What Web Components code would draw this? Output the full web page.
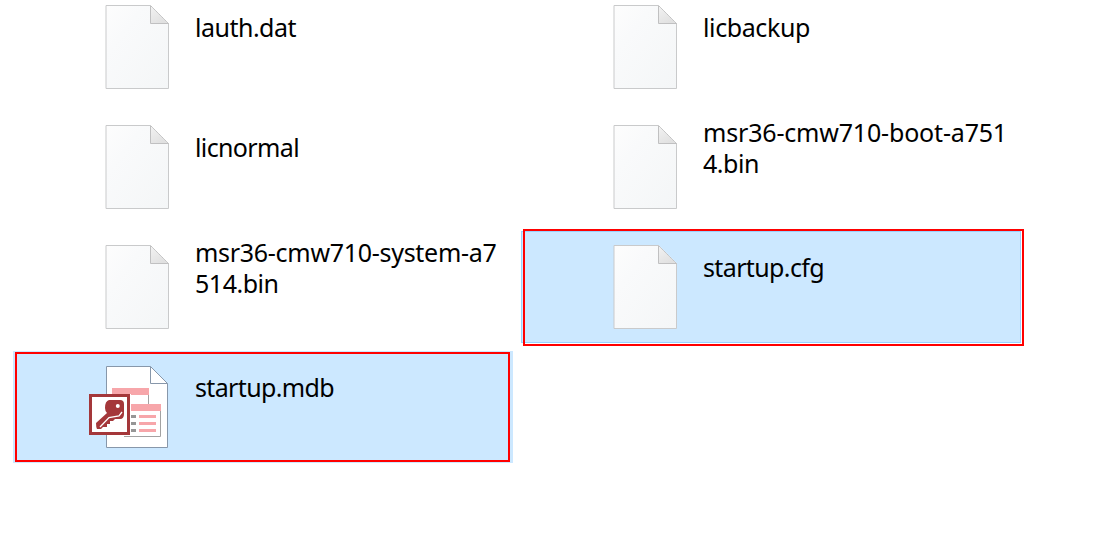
<!DOCTYPE html>
<html lang="en">
<head>
<meta charset="utf-8">
<title>Files</title>
<style>
html, body { margin: 0; height: 100%; background: #fff; overflow: hidden; }
</style>
</head>
<body>
<file-browser></file-browser>
<script>
class FileIcon extends HTMLElement {
  connectedCallback() {
    const blank = `<svg width="64" height="84" viewBox="0 0 64 84">
      <defs>
        <linearGradient id="p" x1="0" y1="0" x2="1" y2="1"><stop offset="0" stop-color="#fdfdfd"/><stop offset=".3" stop-color="#f9fafb"/><stop offset="1" stop-color="#f4f6f7"/></linearGradient>
        <linearGradient id="f" x1="0" y1="0" x2=".6" y2="1"><stop offset="0" stop-color="#f3f3f3"/><stop offset="1" stop-color="#e0e0e0"/></linearGradient>
      </defs>
      <path d="M1 .5H45.5L63.5 18.5V83.5H1Z" fill="url(#p)" stroke="#c9cacb"/>
      <path d="M45.5.5L63.5 18.5H45.5Z" fill="url(#f)" stroke="#c0c0c1"/>
      <path d="M46 .5L63.5 18" stroke="#fff" stroke-dasharray="1 1.2" stroke-width=".8" opacity=".7"/>
    </svg>`;
    const access = `<svg width="80" height="84" viewBox="0 0 80 84" style="margin-left:-16px">
      <path d="M17.5 1.5H61.5L78.5 18.5V82.5H17.5Z" fill="#fff" stroke="#8797aa"/>
      <path d="M61.5 1.5V18.5H78.5" fill="none" stroke="#8797aa"/>
      <path d="M59.5 30V39M35 71.5H71.5V45" fill="none" stroke="#a2a2a2"/>
      <path d="M23 23H60V30H23ZM41 39H72V46H41Z" fill="#f7a6aa"/>
      <path d="M50 50H67V53H50ZM50 57H67V60H50ZM50 64H67V67H50Z" fill="#f7a6aa"/>
      <path d="M41 50H47V53H41ZM41 57H47V60H41ZM41 64H47V67H41Z" fill="#969696"/>
      <path d="M0 29H42V70H0Z" fill="#fff"/>
      <path d="M1.5 30.5H39.5V68.5H1.5Z" fill="#fff" stroke="#a4373a" stroke-width="3"/>
      <path d="M20 35H31Q35 35 35 39V49Q35 54 31 54H26L24 56H21V59H18V62H14L12 64H8Q7 62 7 58L18 48Q16 46 16 43Q16 36 20 35Z" fill="#a4373a"/>
      <circle cx="28.8" cy="41" r="2" fill="#fff"/>
      <path d="M11 62L20 52.5L30 51L33 47" fill="none" stroke="#fff" stroke-width="1.3"/>
    </svg>`;
    this.attachShadow({mode: 'open'}).innerHTML = `<style>:host{display:block;width:64px;height:84px}svg{display:block}</style>` +
      (this.getAttribute('type') === 'access' ? access : blank);
  }
}
customElements.define('file-icon', FileIcon);

/* One line of a file name, tracked so that its advance equals the given width. */
class NameLine extends HTMLElement {
  connectedCallback() {
    this.attachShadow({mode: 'open'}).innerHTML = `<style>:host{display:block;white-space:nowrap;line-height:31px}span{display:inline-block}</style><span><slot></slot></span>`;
    const s = this.shadowRoot.querySelector('span');
    const n = this.textContent.length;
    s.style.letterSpacing = (Number(this.getAttribute('w')) - s.getBoundingClientRect().width) / n + 'px';
  }
}
customElements.define('name-line', NameLine);

class FileItem extends HTMLElement {
  connectedCallback() {
    this.attachShadow({mode: 'open'}).innerHTML = `<style>
      :host{display:grid;grid-template-columns:64px 1fr;column-gap:26px;box-sizing:border-box;padding:14px 0 0 92px;position:relative}
      :host([selected]){background:#cce8ff}
      :host([selected=focus]){box-shadow:inset 0 0 0 1px #99d1ff}
      .name{height:45px;display:flex;flex-direction:column;justify-content:center}
      ::slotted(red-frame){position:absolute}
    </style><file-icon type="${this.getAttribute('type') || 'blank'}"></file-icon><div class="name"><slot></slot></div><slot name="mark"></slot>`;
  }
}
customElements.define('file-item', FileItem);

class RedFrame extends HTMLElement {
  connectedCallback() {
    this.attachShadow({mode: 'open'}).innerHTML = `<style>:host{display:block;box-sizing:border-box;border:2px solid #f00}</style>`;
  }
}
customElements.define('red-frame', RedFrame);

class FileBrowser extends HTMLElement {
  connectedCallback() {
    this.attachShadow({mode: 'open'}).innerHTML = `<style>
      :host{display:grid;grid-template-columns:500px 500px;grid-auto-rows:112px;gap:8px;margin-top:-9px;padding-left:13px;font:25px "Noto Sans","Open Sans",sans-serif;color:#000}
    </style>
    <file-item><name-line w="101">lauth.dat</name-line></file-item>
    <file-item><name-line w="107">licbackup</name-line></file-item>
    <file-item><name-line w="104">licnormal</name-line></file-item>
    <file-item><name-line w="304">msr36-cmw710-boot-a751</name-line><name-line w="56">4.bin</name-line></file-item>
    <file-item><name-line w="301.5">msr36-cmw710-system-a7</name-line><name-line w="83.5">514.bin</name-line></file-item>
    <file-item selected="focus"><name-line w="121">startup.cfg</name-line><red-frame slot="mark" style="left:2px;top:-2px;width:501px;height:117px"></red-frame></file-item>
    <file-item selected type="access"><name-line w="139">startup.mdb</name-line><red-frame slot="mark" style="left:2px;top:1px;width:495px;height:110px"></red-frame></file-item>`;
  }
}
customElements.define('file-browser', FileBrowser);
</script>
</body>
</html>
